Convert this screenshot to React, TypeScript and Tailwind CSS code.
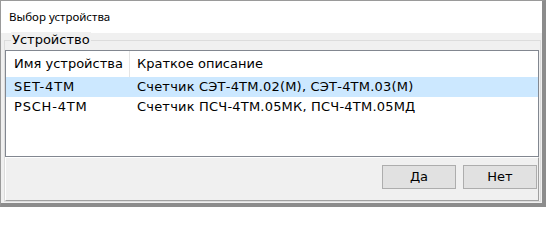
import React from "react";

const titleFont = { fontFamily: '"Noto Sans", "Open Sans", sans-serif' };
const uiFont = { fontFamily: '"DejaVu Sans", "Noto Sans", sans-serif' };

const rows = [
  { name: "SET-4TM", desc: "Счетчик СЭТ-4ТМ.02(М), СЭТ-4ТМ.03(М)", selected: true },
  { name: "PSCH-4TM", desc: "Счетчик ПСЧ-4ТМ.05МК, ПСЧ-4ТМ.05МД", selected: false },
];

export default function App() {
  return (
    <div className="w-[546px] h-[207px] flex flex-col border-l border-t border-[#9a9a9a] border-r-[4px] border-b-[4px] border-r-[#8c8c8c] border-b-[#8c8c8c] text-black">
      <div
        className="h-[32px] bg-white flex items-center pl-[8px] text-[11.5px] shrink-0"
        style={titleFont}
      >
        Выбор устройства
      </div>
      <div
        className="flex-1 bg-[#f0f0f0] pt-[7px] pl-[3px] pr-[1px] pb-[1px] flex flex-col"
        style={uiFont}
      >
        <div className="relative flex-1 border border-[#dcdcdc] pt-[9px] pr-[1px] flex flex-col">
          <span className="absolute left-[6px] top-[-9px] bg-[#f0f0f0] px-[1px] text-[13px] leading-[16px]">
            Устройство
          </span>
          <div className="h-[107px] border border-[#828790] bg-white flex flex-col text-[13px] shrink-0">
            <div className="h-[26px] flex items-center shrink-0">
              <div className="w-[124px] h-full border-r border-[#e5e5e5] pl-[8px] flex items-center whitespace-nowrap">
                Имя устройства
              </div>
              <div className="pl-[7px] whitespace-nowrap">Краткое описание</div>
            </div>
            {rows.map((r) => (
              <div
                key={r.name}
                className={
                  "h-[20px] flex items-center shrink-0 " + (r.selected ? "bg-[#cce8ff]" : "")
                }
              >
                <div className="w-[124px] pl-[8px] whitespace-nowrap tracking-[0.8px]">{r.name}</div>
                <div className="pl-[7px] whitespace-nowrap tracking-[0.2px]">{r.desc}</div>
              </div>
            ))}
          </div>
          <div className="flex-1 border border-t-white border-l-white border-r-[#a0a0a0] border-b-[#a0a0a0] flex justify-end items-start pt-[7px] pr-[1px] gap-[7px]">
            <button className="w-[74px] h-[24px] bg-[#e1e1e1] border border-[#adadad] text-[13px] flex items-center justify-center">
              Да
            </button>
            <button className="w-[74px] h-[24px] bg-[#e1e1e1] border border-[#adadad] text-[13px] flex items-center justify-center">
              Нет
            </button>
          </div>
        </div>
      </div>
    </div>
  );
}
